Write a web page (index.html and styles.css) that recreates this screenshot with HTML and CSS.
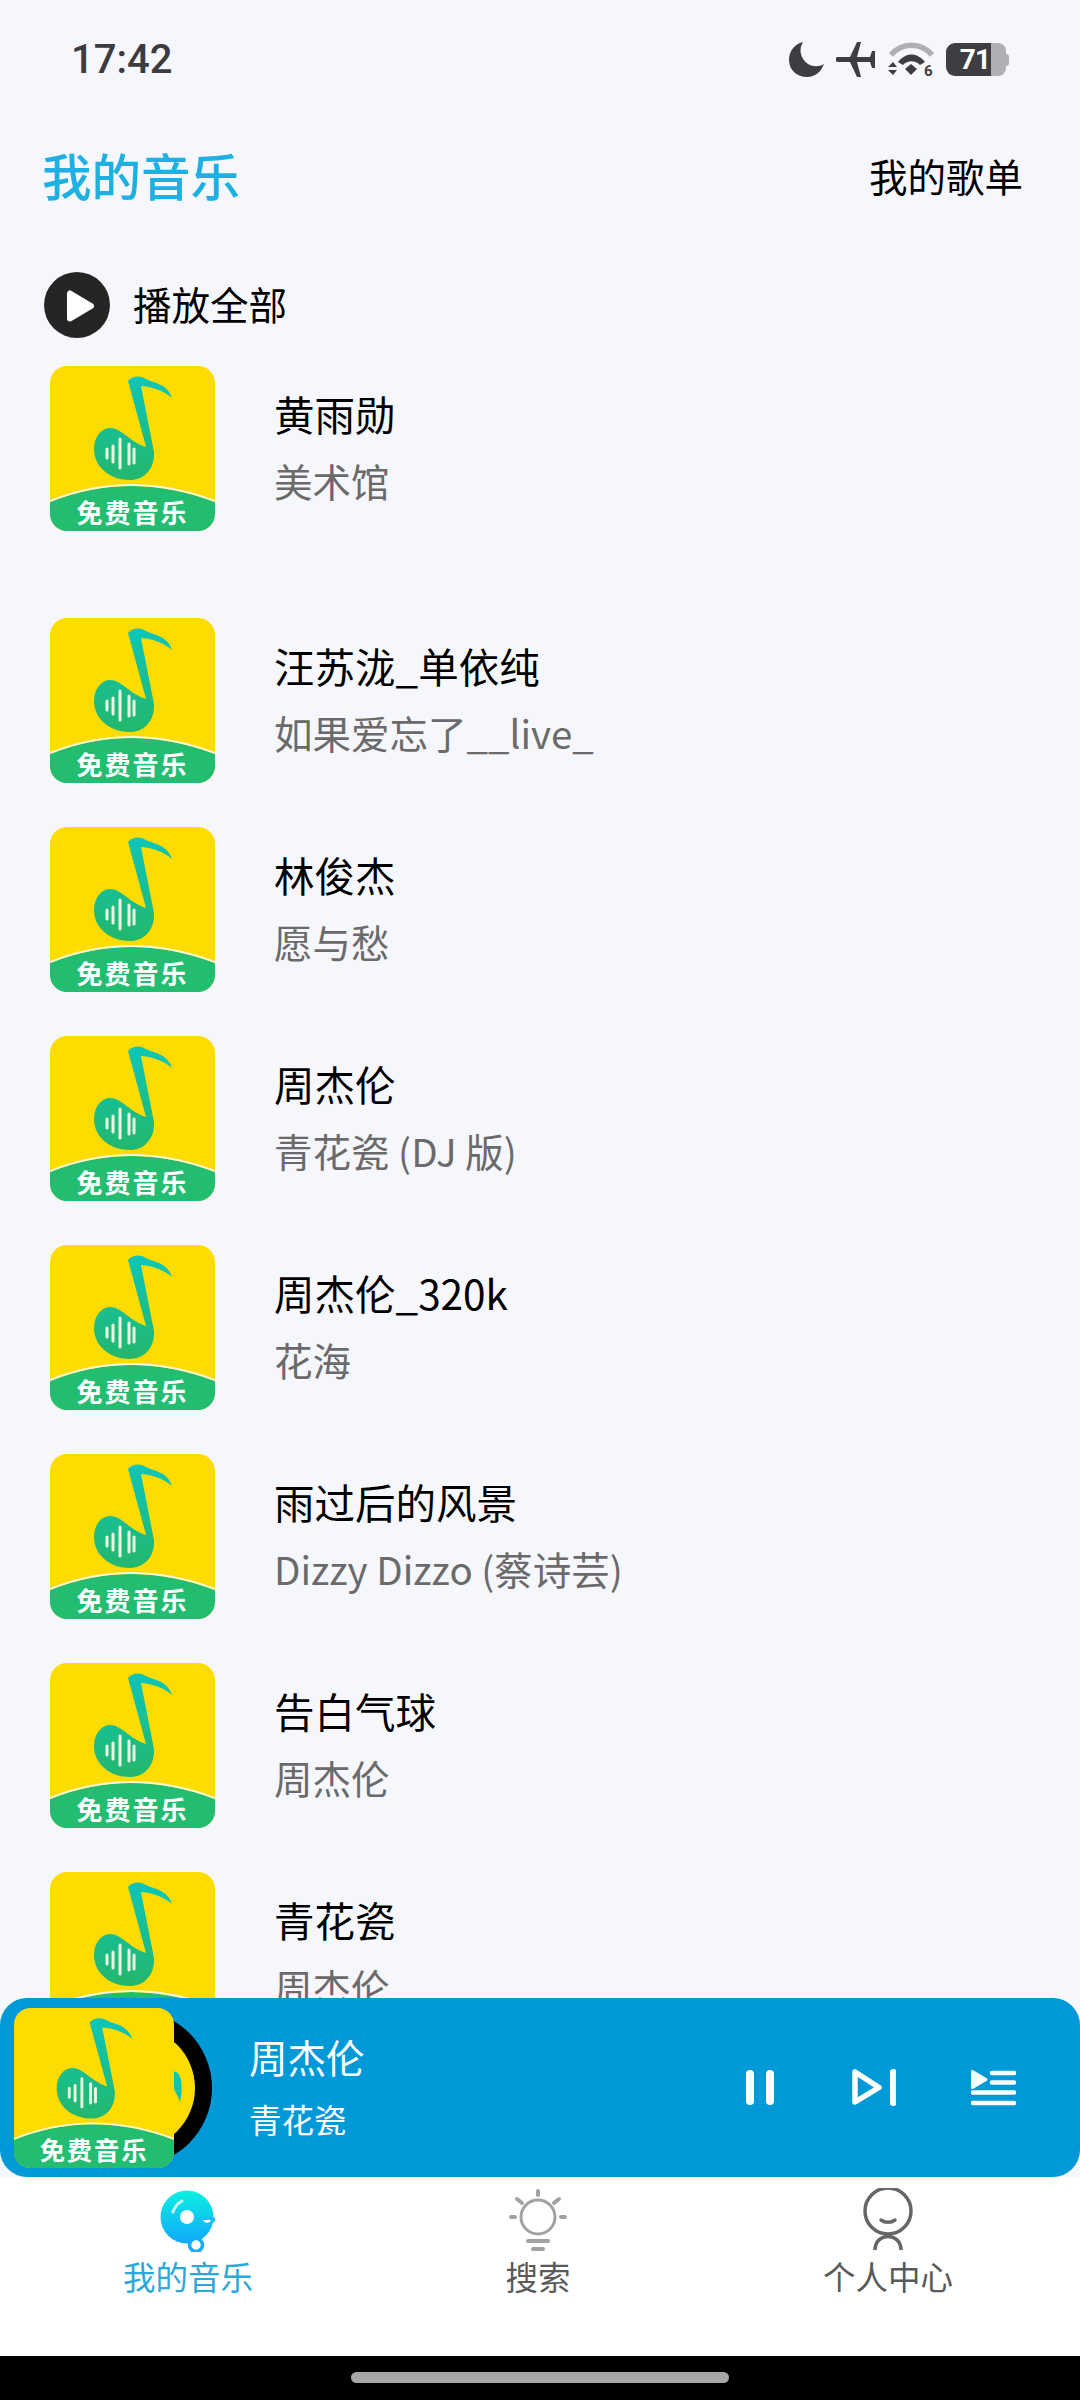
FILE: index.html
```html
<!DOCTYPE html>
<html lang="zh">
<head>
<meta charset="utf-8">
<title>我的音乐</title>
<link rel="stylesheet" href="styles.css">
</head>
<body>
<svg class="defs" width="0" height="0" aria-hidden="true">
  <defs>
    <linearGradient id="noteGrad" x1="0" y1="0" x2="0" y2="1">
      <stop offset="0" stop-color="#0cc6b8"/>
      <stop offset="1" stop-color="#24b76c"/>
    </linearGradient>
    <linearGradient id="tabGrad" x1="0" y1="0" x2="0" y2="1">
      <stop offset="0" stop-color="#0cf0e0"/>
      <stop offset="1" stop-color="#10a8fb"/>
    </linearGradient>
    <symbol id="art" viewBox="0 0 165 165">
      <rect width="165" height="165" rx="17" fill="#ffdc00"/>
      <path d="M78 15C82 10 90 9 96 13C103 17 117 17 122 32C115 26 105 21 91 20L104 86C105 104 93 114 80 114C60 114 44 101 44 83C44 70 52 62 60 62C72 62 78 75 96 81Z" fill="url(#noteGrad)"/>
      <path d="M57 83V92M63 80V96M70 73V102M79 78V98M84 83V97" stroke="#e9f8df" stroke-width="3" stroke-linecap="round" fill="none"/>
      <path d="M0 136Q80 104 165 136V148A17 17 0 0 1 148 165H17A17 17 0 0 1 0 148Z" fill="#23bd72"/>
      <path d="M0 135Q80 103 165 135" fill="none" stroke="#fff6d0" stroke-width="2"/>
      <text class="art-text" x="82.5" y="157" text-anchor="middle">免费音乐</text>
    </symbol>
  </defs>
</svg>

<div class="status">
  <span class="time">17:42</span>
  <div class="status-icons">
    <svg class="ic-moon" viewBox="0 0 35 35"><path d="M14 0C5 2 0 10 0 18C0 28 8 35 18 35C26 35 32 30 35 22C30 25 24 25 19 22C12 17 9 8 14 0Z" fill="#3e3e42"/></svg>
    <svg class="ic-plane" viewBox="0 0 40 35"><path d="M2 15H14L21 0H25L21 15H34L36 9H39V26H36L34 20H21L25 35H21L14 20H2A2.500 2.500 0 0 1 2 15Z" fill="#3e3e42"/></svg>
    <svg class="ic-wifi" viewBox="0 0 47 35">
      <path d="M3 13C14 0 33 0 44 13" fill="none" stroke="#b0b0b4" stroke-width="5.500"/>
      <path d="M10 20C18 10 29 10 37 20L32 23C27 18 20 18 15 23Z" fill="#3e3e42"/>
      <path d="M17 27L23 22L29 27L23 33Z" fill="#3e3e42"/>
      <path d="M0 25L5 20L9 25ZM0 28L5 33L9 28Z" fill="#3e3e42"/>
      <text class="wifi-text" x="36" y="34">6</text>
    </svg>
    <div class="battery">
      <span class="battery-fill">71</span>
      <span class="battery-rest"></span>
      <span class="battery-tip"></span>
    </div>
  </div>
</div>

<header class="head">
  <h1 class="head-title">我的音乐</h1>
  <span class="head-link">我的歌单</span>
</header>

<div class="play-all">
  <svg class="play-icon" viewBox="0 0 66 66">
    <circle cx="33" cy="33" r="33" fill="#252525"/>
    <path d="M26 21.500V46.500L47 34Z" fill="#fff" stroke="#fff" stroke-width="6" stroke-linejoin="round"/>
  </svg>
  <span>播放全部</span>
</div>

<main class="list">
  <div class="row row-first">
    <svg class="cover"><use href="#art"/></svg>
    <div class="row-text"><div class="row-title">黄雨勋</div><div class="row-sub">美术馆</div></div>
  </div>
  <div class="row">
    <svg class="cover"><use href="#art"/></svg>
    <div class="row-text"><div class="row-title">汪苏泷_单依纯</div><div class="row-sub">如果爱忘了__live_</div></div>
  </div>
  <div class="row">
    <svg class="cover"><use href="#art"/></svg>
    <div class="row-text"><div class="row-title">林俊杰</div><div class="row-sub">愿与愁</div></div>
  </div>
  <div class="row">
    <svg class="cover"><use href="#art"/></svg>
    <div class="row-text"><div class="row-title">周杰伦</div><div class="row-sub">青花瓷 (DJ 版)</div></div>
  </div>
  <div class="row">
    <svg class="cover"><use href="#art"/></svg>
    <div class="row-text"><div class="row-title">周杰伦_320k</div><div class="row-sub">花海</div></div>
  </div>
  <div class="row">
    <svg class="cover"><use href="#art"/></svg>
    <div class="row-text"><div class="row-title">雨过后的风景</div><div class="row-sub">Dizzy Dizzo (蔡诗芸)</div></div>
  </div>
  <div class="row">
    <svg class="cover"><use href="#art"/></svg>
    <div class="row-text"><div class="row-title">告白气球</div><div class="row-sub">周杰伦</div></div>
  </div>
  <div class="row">
    <svg class="cover"><use href="#art"/></svg>
    <div class="row-text"><div class="row-title">青花瓷</div><div class="row-sub">周杰伦</div></div>
  </div>
</main>

<section class="mini">
  <div class="mini-art">
    <svg class="mini-disc" viewBox="0 0 156 156">
      <circle cx="78" cy="78" r="78" fill="#000"/>
      <circle cx="78" cy="78" r="61" fill="#ffdc00"/>
      <path d="M116 62C119 60 124 63 125 70C126 76 126 84 124 92C121 82 112 74 116 62Z" fill="#10c4ae"/>
    </svg>
    <svg class="mini-cover"><use href="#art"/></svg>
  </div>
  <div class="mini-text">
    <div class="mini-title">周杰伦</div>
    <div class="mini-sub">青花瓷</div>
  </div>
  <div class="controls">
    <svg class="ic-pause" viewBox="0 0 28 35"><rect width="8" height="35" rx="4" fill="#fff"/><rect x="20" width="8" height="35" rx="4" fill="#fff"/></svg>
    <svg class="ic-next" viewBox="0 0 44 37">
      <path d="M3 3V33L27 18.500Z" fill="none" stroke="#fff" stroke-width="5.500" stroke-linejoin="round"/>
      <rect x="38" y="0" width="6.500" height="37" rx="3" fill="#fff"/>
    </svg>
    <svg class="ic-queue" viewBox="0 0 45 36">
      <path d="M1.500 1.500V17.500L15 9.500Z" fill="#fff" stroke="#fff" stroke-width="3" stroke-linejoin="round"/>
      <path d="M21 3H43M21 12.500H43M2 22.500H43M2 33H43" stroke="#fff" stroke-width="4.500" stroke-linecap="round" fill="none"/>
    </svg>
  </div>
</section>

<nav class="tabs">
  <div class="tab tab-active">
    <svg class="tab-icon" viewBox="0 0 64 64">
      <circle cx="31" cy="29" r="26.500" fill="url(#tabGrad)"/>
      <circle cx="31" cy="29" r="7" fill="#fff"/>
      <path d="M17 24C19 18 22 15 26 13" fill="none" stroke="#c8f8f6" stroke-width="3" stroke-linecap="round"/>
      <path d="M45 29H57C60 29 60 32 58 34L51 39C47 40 43 35 45 29Z" fill="#1cc0f8"/>
      <path d="M47 32H55C54 35 49 36 47 32Z" fill="#fff"/>
      <circle cx="40" cy="57" r="6.500" fill="#fff" stroke="#12b0fa" stroke-width="3.500"/>
    </svg>
    <span>我的音乐</span>
  </div>
  <div class="tab">
    <svg class="tab-icon" viewBox="0 0 64 64">
      <circle cx="32" cy="29" r="17" fill="none" stroke="#a2a2a2" stroke-width="3"/>
      <path d="M32 3V7M11 11L16 15M53 11L48 15M5 29H9M55 29H59M22 53H42M27 61H37" stroke="#a2a2a2" stroke-width="4" stroke-linecap="round" fill="none"/>
    </svg>
    <span>搜索</span>
  </div>
  <div class="tab">
    <svg class="tab-icon" viewBox="0 0 64 64">
      <circle cx="32" cy="23" r="23" fill="none" stroke="#666" stroke-width="3.500"/>
      <path d="M25 32C29 35 35 35 39 32" fill="none" stroke="#666" stroke-width="3.500" stroke-linecap="round"/>
      <path d="M19 62C19 44 45 44 45 62" fill="none" stroke="#666" stroke-width="3.500"/>
    </svg>
    <span>个人中心</span>
  </div>
</nav>

<div class="nav-bar"><span class="nav-pill"></span></div>
</body>
</html>
```

FILE: styles.css
```css
* { box-sizing: border-box; }
html, body { margin: 0; padding: 0; }
body {
  width: 1080px;
  height: 2400px;
  overflow: hidden;
  display: flex;
  flex-direction: column;
  background: #f6f7fc;
  color: #000;
  font-family: "Noto Sans CJK SC", "Noto Sans", sans-serif;
}
.defs { position: absolute; }
.art-text { font-size: 26px; font-weight: 700; letter-spacing: 2px; fill: #fff; font-family: "Noto Sans CJK SC", sans-serif; }
.wifi-text { font-size: 15px; font-weight: 700; fill: #3e3e42; font-family: Roboto, sans-serif; }

.status {
  height: 120px;
  flex: none;
  display: flex;
  justify-content: space-between;
  padding: 36px 71px 0 71px;
  align-items: flex-start;
}
.time { font-family: Roboto, sans-serif; font-weight: 500; font-size: 40px; line-height: 48px; color: #3c3c40; }
.status-icons { display: flex; align-items: center; gap: 12px; padding-top: 6px; }
.ic-moon { width: 35px; height: 35px; }
.ic-plane { width: 40px; height: 35px; }
.ic-wifi { width: 47px; height: 35px; }
.battery { display: flex; align-items: center; height: 33px; margin-left: -1px; }
.battery-fill {
  width: 45px; height: 33px;
  background: #3e3e42; color: #fff;
  border-radius: 9px 0 0 9px;
  font: 700 28px/33px Roboto, sans-serif;
  letter-spacing: -1px;
  text-align: right;
  padding-right: 1px;
}
.battery-rest { width: 15px; height: 33px; background: #b0b0b4; border-radius: 0 8px 8px 0; }
.battery-tip { width: 3px; height: 12px; background: #b0b0b4; border-radius: 0 3px 3px 0; }

.head {
  flex: none;
  height: 116px;
  display: flex;
  justify-content: space-between;
  align-items: flex-start;
  padding: 20px 57px 0 42px;
}
.head-title { margin: 0; font-size: 49.5px; font-weight: 500; color: #1eb0e2; line-height: 70px; }
.head-link { font-size: 38.500px; line-height: 70px; }

.play-all {
  flex: none;
  height: 130px;
  display: flex;
  align-items: flex-start;
  gap: 23px;
  padding: 36px 0 0 44px;
  font-size: 38.500px;
  line-height: 62px;
}
.play-icon { width: 66px; height: 66px; flex: none; }

.list { flex: 1; min-height: 0; overflow: hidden; }
.row { display: flex; gap: 59px; padding: 0 0 44px 50px; }
.row-first { padding-bottom: 87px; }
.cover { width: 165px; height: 165px; flex: none; }
.row-text { padding-top: 18px; }
.row-title { font-size: 40.500px; line-height: 60px; }
.row-sub { font-size: 38.500px; line-height: 60px; margin-top: 6px; color: #6a6a6a; }

.mini {
  flex: none;
  height: 179px;
  background: #0099d8;
  border-radius: 27px;
  display: flex;
  align-items: center;
  padding: 0 64px 0 14px;
  color: #fff;
}
.mini-art { position: relative; width: 160px; height: 160px; flex: none; }
.mini-cover { position: absolute; left: 0; top: 0; width: 160px; height: 160px; }
.mini-disc { position: absolute; left: 42px; top: 2px; width: 156px; height: 156px; }
.mini-text { margin-left: 75px; padding-bottom: 3px; }
.mini-title { font-size: 38.500px; line-height: 56px; }
.mini-sub { font-size: 32.500px; line-height: 50px; margin-top: 10px; }
.controls { margin-left: auto; display: flex; align-items: center; gap: 78px; }
.ic-pause { width: 28px; height: 35px; }
.ic-next { width: 44px; height: 37px; }
.ic-queue { width: 45px; height: 36px; margin-left: -3px; }

.tabs {
  flex: none;
  height: 179px;
  background: #fff;
  display: flex;
  justify-content: space-between;
  padding: 11px 122px 0 118px;
}
.tab {
  width: 140px;
  display: flex;
  flex-direction: column;
  align-items: center;
  font-size: 32.500px;
  line-height: 44px;
  color: #5a5a5a;
  white-space: nowrap;
}
.tab-active { color: #2ea8d8; }
.tab-icon { width: 64px; height: 64px; flex: none; margin-bottom: 2px; }

.nav-bar {
  flex: none;
  height: 44px;
  background: #000;
  display: flex;
  justify-content: center;
  padding-top: 16px;
}
.nav-pill { width: 378px; height: 11px; border-radius: 6px; background: #a6a6a6; }
```
